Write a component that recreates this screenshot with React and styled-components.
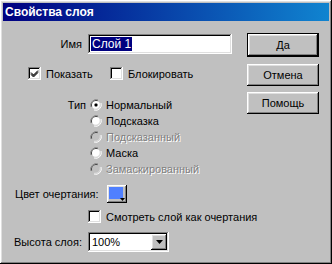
import React from 'react';
import styled, { createGlobalStyle } from 'styled-components';

const GlobalStyle = createGlobalStyle`
  html, body {
    margin: 0;
    padding: 0;
    background: #c0c0c0;
  }
  body {
    font-family: "Liberation Sans", Arial, sans-serif;
    font-size: 11px;
    color: #000;
  }
`;

const raised = `
  box-shadow: inset -1px -1px #000, inset 1px 1px #fff,
    inset -2px -2px #808080, inset 2px 2px #dfdfdf;
`;

const sunken = `
  box-shadow: inset -1px -1px #fff, inset 1px 1px #808080,
    inset -2px -2px #dfdfdf, inset 2px 2px #000;
`;

const Window = styled.div`
  width: 332px;
  height: 264px;
  box-sizing: border-box;
  background: #c0c0c0;
  padding: 3px;
  ${raised}
  display: flex;
  flex-direction: column;
`;

const TitleBar = styled.div`
  height: 18px;
  background: linear-gradient(to right, #000080, #1084d0);
  color: #fff;
  font-weight: bold;
  font-size: 12px;
  display: flex;
  align-items: center;
  padding-left: 2px;
`;

const Body = styled.div`
  flex: 1;
  display: flex;
  padding-top: 12px;
`;

const Form = styled.div`
  flex: 1;
  min-width: 0;
  display: flex;
  flex-direction: column;
`;

const Buttons = styled.div`
  width: 72px;
  flex-shrink: 0;
  margin-right: 10px;
  display: flex;
  flex-direction: column;
`;

const Button = styled.div`
  height: ${p => (p.$default ? 24 : 22)}px;
  margin-top: ${p => p.$top || 0}px;
  box-sizing: border-box;
  display: flex;
  align-items: center;
  justify-content: center;
  background: #c0c0c0;
  ${p => (p.$default ? 'border: 1px solid #000;' : '')}
  ${raised}
  font-size: 11px;
`;

const Row = styled.div`
  display: flex;
  align-items: center;
  height: ${p => p.$h}px;
  margin-top: ${p => p.$top || 0}px;
  padding-left: ${p => p.$indent || 0}px;
`;

const Label = styled.div`
  width: ${p => (p.$w ? `${p.$w}px` : 'auto')};
  text-align: ${p => (p.$right ? 'right' : 'left')};
  margin-right: ${p => p.$gap || 0}px;
  white-space: nowrap;
  flex-shrink: 0;
`;

const TextField = styled.div`
  width: 144px;
  height: 20px;
  flex-shrink: 0;
  box-sizing: border-box;
  background: #fff;
  ${sunken}
  display: flex;
  align-items: center;
  padding-left: 3px;
`;

const Selection = styled.span`
  background: #000080;
  color: #fff;
  padding: 0 1px;
  line-height: 14px;
  font-size: 12px;
`;

const Check = styled.label`
  display: flex;
  align-items: center;
  flex-shrink: 0;
  width: ${p => (p.$w ? `${p.$w}px` : 'auto')};
  white-space: nowrap;
`;

const Box = styled.span`
  width: 13px;
  height: 13px;
  flex-shrink: 0;
  box-sizing: border-box;
  background: #fff;
  ${sunken}
  margin-right: 5px;
  display: flex;
  align-items: center;
  justify-content: center;
`;

const RadioGroup = styled.div`
  display: flex;
  align-items: flex-start;
  margin-top: 17px;
`;

const RadioList = styled.div`
  display: flex;
  flex-direction: column;
`;

const RadioRow = styled.div`
  display: flex;
  align-items: center;
  height: 16px;
  white-space: nowrap;
  color: ${p => (p.$disabled ? '#808080' : '#000')};
  text-shadow: ${p => (p.$disabled ? '1px 1px #fff' : 'none')};
`;

const TypeLabel = styled(Label)`
  height: 16px;
  line-height: 16px;
`;

const Swatch = styled.div`
  width: 20px;
  height: 18px;
  flex-shrink: 0;
  box-sizing: border-box;
  ${raised}
  background: #c0c0c0;
  position: relative;
  padding: 2px;
`;

const SwatchFill = styled.div`
  width: 14px;
  height: 12px;
  background: #5080ff;
`;

const SwatchArrow = styled.svg`
  position: absolute;
  right: 2px;
  bottom: 2px;
`;

const Select = styled.div`
  width: 81px;
  height: 20px;
  flex-shrink: 0;
  box-sizing: border-box;
  background: #fff;
  ${sunken}
  display: flex;
  align-items: center;
  padding: 2px;
`;

const SelectText = styled.div`
  flex: 1;
  padding-left: 2px;
`;

const DropButton = styled.div`
  width: 16px;
  height: 16px;
  box-sizing: border-box;
  background: #c0c0c0;
  ${raised}
  display: flex;
  align-items: center;
  justify-content: center;
`;

const Radio = ({ checked, disabled }) => (
  <svg width="12" height="12" viewBox="0 0 12 12" style={{ marginRight: 4, flexShrink: 0 }}>
    <path d="M1 8 A5.5 5.5 0 0 1 8 1" fill="none" stroke="#808080" strokeWidth="1" />
    <path d="M2 7.5 A4.5 4.5 0 0 1 7.5 2" fill="none" stroke="#000" strokeWidth="1" />
    <circle cx="6" cy="6" r="4" fill={disabled ? '#c0c0c0' : '#fff'} />
    <path d="M11 4 A5.5 5.5 0 0 1 4 11" fill="none" stroke="#fff" strokeWidth="1" />
    <path d="M10 4.5 A4.5 4.5 0 0 1 4.5 10" fill="none" stroke="#dfdfdf" strokeWidth="1" />
    {checked && <rect x="4.5" y="4.5" width="3" height="3" rx="1" fill="#000" />}
  </svg>
);

const CheckMark = () => (
  <svg width="9" height="9" viewBox="0 0 9 9">
    <path d="M1 3.5 L3.5 6 L8 1.5 M1 4.5 L3.5 7 L8 2.5 M1 5.5 L3.5 8 L8 3.5" fill="none" stroke="#000" strokeWidth="1" />
  </svg>
);

const Arrow = () => (
  <svg width="7" height="4" viewBox="0 0 7 4">
    <path d="M0 0 H7 L3.5 4 Z" fill="#000" />
  </svg>
);

const types = [
  { name: 'Нормальный', checked: true },
  { name: 'Подсказка' },
  { name: 'Подсказанный', disabled: true },
  { name: 'Маска' },
  { name: 'Замаскированный', disabled: true },
];

export default function App() {
  return (
    <>
      <GlobalStyle />
      <Window>
        <TitleBar>Свойства слоя</TitleBar>
        <Body>
          <Form>
            <Row $h={22}>
              <Label $w={79} $right $gap={6}>Имя</Label>
              <TextField><Selection>Слой 1</Selection></TextField>
            </Row>

            <Row $h={13} $top={12} $indent={25}>
              <Check $w={82}>
                <Box><CheckMark /></Box>
                Показать
              </Check>
              <Check>
                <Box />
                Блокировать
              </Check>
            </Row>

            <RadioGroup>
              <TypeLabel $w={83} $right $gap={4}>Тип</TypeLabel>
              <RadioList>
                {types.map(t => (
                  <RadioRow key={t.name} $disabled={t.disabled}>
                    <Radio checked={t.checked} disabled={t.disabled} />
                    {t.name}
                  </RadioRow>
                ))}
              </RadioList>
            </RadioGroup>

            <Row $h={18} $top={8} $indent={12}>
              <Label $w={92}>Цвет очертания:</Label>
              <Swatch>
                <SwatchFill />
                <SwatchArrow width="5" height="3" viewBox="0 0 5 3">
                  <path d="M0 0 H5 L2.5 3 Z" fill="#000" />
                </SwatchArrow>
              </Swatch>
            </Row>

            <Row $h={13} $top={7} $indent={85}>
              <Check>
                <Box />
                Смотреть слой как очертания
              </Check>
            </Row>

            <Row $h={20} $top={9} $indent={11}>
              <Label $w={74}>Высота слоя:</Label>
              <Select>
                <SelectText>100%</SelectText>
                <DropButton><Arrow /></DropButton>
              </Select>
            </Row>
          </Form>

          <Buttons>
            <Button $default>Да</Button>
            <Button $top={7}>Отмена</Button>
            <Button $top={6}>Помощь</Button>
          </Buttons>
        </Body>
      </Window>
    </>
  );
}
